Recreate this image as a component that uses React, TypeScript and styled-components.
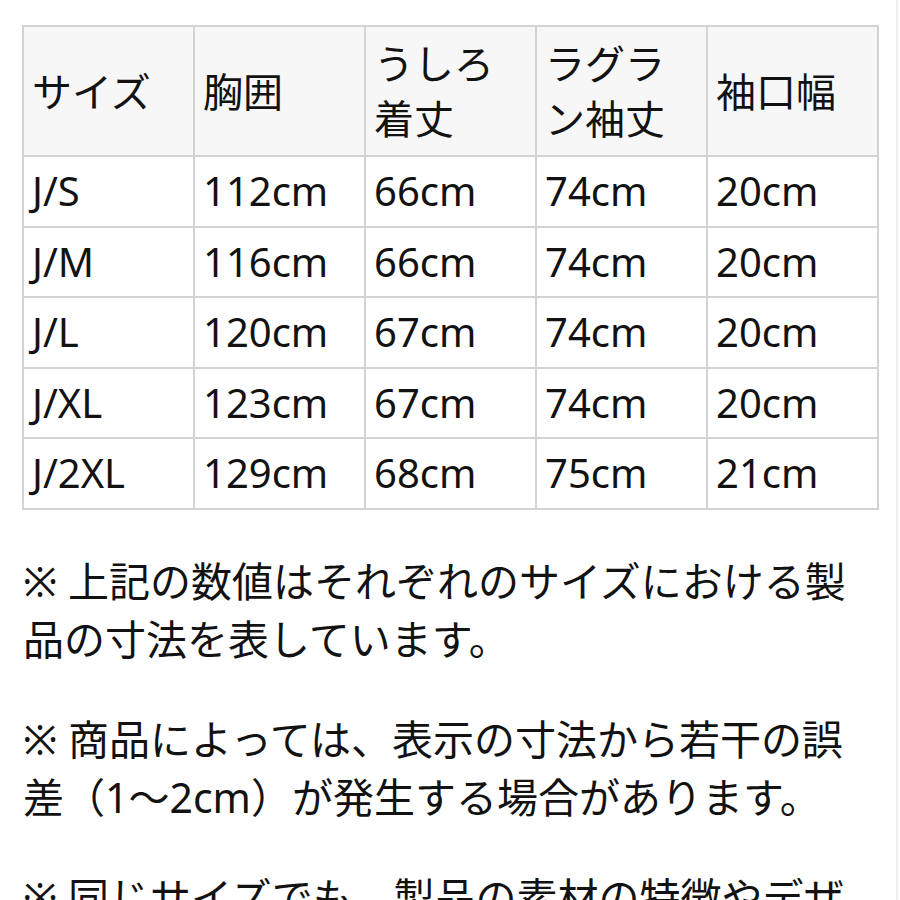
import styled, { createGlobalStyle } from "styled-components";

const GlobalStyle = createGlobalStyle`
  html, body {
    margin: 0;
    padding: 0;
    background: #ffffff;
  }
  body {
    font-family: "Noto Sans", "Noto Sans CJK JP", sans-serif;
    color: #121212;
    overflow: hidden;
  }
`;

const headers = ["サイズ", "胸囲", "うしろ着丈", "ラグラン袖丈", "袖口幅"];

const rows = [
  ["J/S", "112cm", "66cm", "74cm", "20cm"],
  ["J/M", "116cm", "66cm", "74cm", "20cm"],
  ["J/L", "120cm", "67cm", "74cm", "20cm"],
  ["J/XL", "123cm", "67cm", "74cm", "20cm"],
  ["J/2XL", "129cm", "68cm", "75cm", "21cm"],
];

const notes = [
  "※ 上記の数値はそれぞれのサイズにおける製品の寸法を表しています。",
  "※ 商品によっては、表示の寸法から若干の誤差（1〜2cm）が発生する場合があります。",
  "※ 同じサイズでも、製品の素材の特徴やデザインにより、着用感が異なる場合があります。",
];

export default function App() {
  return (
    <>
      <GlobalStyle />
      <Page>
        <SizeTable>
          <thead>
            <tr>
              {headers.map((h) => (
                <Th key={h}>{h}</Th>
              ))}
            </tr>
          </thead>
          <tbody>
            {rows.map((r) => (
              <tr key={r[0]}>
                {r.map((c, i) => (
                  <Td key={i}>{c}</Td>
                ))}
              </tr>
            ))}
          </tbody>
        </SizeTable>
        <Notes>
          {notes.map((n) => (
            <Note key={n}>{n}</Note>
          ))}
        </Notes>
      </Page>
    </>
  );
}

const Page = styled.main`
  width: 898px;
  height: 900px;
  box-sizing: border-box;
  padding: 25px 0 0 22px;
  border-right: 2px solid #efefef;
  overflow: hidden;
`;

const SizeTable = styled.table`
  width: 857px;
  table-layout: fixed;
  border-collapse: collapse;
  font-size: 40px;
  border: 2px solid #d3d3d3;
`;

const Th = styled.th`
  background: #f7f7f7;
  border: 2px solid #d3d3d3;
  font-weight: 400;
  text-align: left;
  vertical-align: middle;
  line-height: 55px;
  padding: 9px 22px 9px 8px;
`;

const Td = styled.td`
  border: 2px solid #d3d3d3;
  line-height: 54.6px;
  padding: 7px 8px;
  white-space: nowrap;
`;

const Notes = styled.div`
  width: 840px;
  padding-left: 1px;
  margin-top: 42px;
  display: flex;
  flex-direction: column;
  gap: 42px;
`;

const Note = styled.p`
  margin: 0;
  font-size: 41px;
  line-height: 58px;
`;
